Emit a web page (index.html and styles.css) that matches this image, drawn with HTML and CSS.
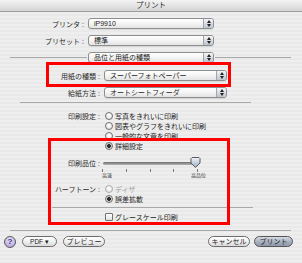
FILE: index.html
```html
<!DOCTYPE html>
<html lang="ja">
<head>
  <meta charset="UTF-8">
  <title>プリント</title>
  <link rel="stylesheet" href="styles.css">
</head>
<body>
  <div class="window">
    <div class="titlebar">プリント</div>

    <div class="head">
      <div class="row">
        <span class="label">プリンタ :</span>
        <div class="popup wide"><span class="value">iP9910</span><i class="arrows"></i></div>
      </div>
      <div class="row">
        <span class="label">プリセット :</span>
        <div class="popup wide"><span class="value">標準</span><i class="arrows"></i></div>
      </div>
    </div>

    <div class="pane-select">
      <div class="line line-left"></div>
      <div class="popup wide"><span class="value">品位と用紙の種類</span><i class="arrows"></i></div>
      <div class="line line-right"></div>
    </div>

    <div class="panel">
      <div class="row">
        <span class="label">用紙の種類 :</span>
        <div class="popup paper"><span class="value">スーパーフォトペーパー</span><i class="arrows"></i></div>
      </div>
      <div class="row row-feed">
        <span class="label">給紙方法 :</span>
        <div class="popup paper"><span class="value">オートシートフィーダ</span><i class="arrows"></i></div>
      </div>

      <div class="sep sep-a"></div>

      <div class="opt opt-first">
        <span class="label">印刷設定 :</span>
        <span class="radio"></span>写真をきれいに印刷
      </div>
      <div class="opt">
        <span class="label"></span>
        <span class="radio"></span>図表やグラフをきれいに印刷
      </div>
      <div class="opt">
        <span class="label"></span>
        <span class="radio"></span>一般的な文章を印刷
      </div>
      <div class="opt">
        <span class="label"></span>
        <span class="radio on"></span>詳細設定
      </div>

      <div class="opt slider-row">
        <span class="label">印刷品位 :</span>
        <div class="slider">
          <div class="track"></div>
          <svg class="thumb" width="11" height="11" viewBox="0 0 11 11">
            <defs>
              <linearGradient id="thumbFill" x1="0" y1="0" x2="0" y2="1">
                <stop offset="0" stop-color="#f2f5fa"/>
                <stop offset="1" stop-color="#9aabc4"/>
              </linearGradient>
            </defs>
            <polygon points="1,1.5 2,0.5 9,0.5 10,1.5 10,6 5.5,10.5 1,6" fill="url(#thumbFill)" stroke="#5a5a5a" stroke-width="1"/>
          </svg>
        </div>
      </div>
      <div class="scale">
        <div class="ticks"><i></i><i></i><i></i><i></i><i></i></div>
        <div class="scale-labels"><span>高速</span><span>高品位</span></div>
      </div>

      <div class="opt opt-halftone off">
        <span class="label">ハーフトーン :</span>
        <span class="radio"></span>ディザ
      </div>
      <div class="opt">
        <span class="label"></span>
        <span class="radio on"></span>誤差拡散
      </div>

      <div class="sep sep-b"></div>

      <div class="opt opt-gray">
        <span class="label"></span>
        <span class="check"></span>グレースケール印刷
      </div>
    </div>

    <div class="sep sep-bottom"></div>

    <div class="footer">
      <span class="help">?</span>
      <span class="btn btn-pdf">PDF ▾</span>
      <span class="btn btn-preview">プレビュー</span>
      <span class="btn btn-cancel">キャンセル</span>
      <span class="btn btn-print">プリント</span>
    </div>

    <div class="mark mark-paper"></div>
    <div class="mark mark-detail"></div>
  </div>
</body>
</html>
```

FILE: styles.css
```css
body {
  margin: 0;
  font-family: "Liberation Sans", "Noto Sans CJK JP", sans-serif;
  font-size: 7px;
  color: #1c1c1c;
}
.window {
  position: relative;
  width: 302px;
  height: 263px;
  overflow: hidden;
  background: repeating-linear-gradient(#eeeeee 0 2px, #e9e9e9 2px 4px);
}
.titlebar {
  height: 11px;
  line-height: 11px;
  text-align: center;
  font-size: 7.5px;
  color: #333;
  background: linear-gradient(#f3f3f3, #d4d4d4);
  border-bottom: 1px solid #9c9c9c;
}

.row {
  display: flex;
  align-items: center;
  height: 11px;
}
.label {
  flex: none;
  text-align: right;
  white-space: nowrap;
  color: #2a2a2a;
}

.head {
  display: flex;
  flex-direction: column;
  gap: 6px;
  padding-top: 6px;
}
.head .label {
  width: 84px;
  margin-right: 4px;
}

/* popup buttons */
.popup {
  box-sizing: border-box;
  height: 11px;
  display: flex;
  align-items: stretch;
  border: 1px solid #8e8e8e;
  border-radius: 3px;
  background: linear-gradient(#ffffff, #f4f4f4 50%, #e3e3e3);
  box-shadow: 0 1px 0 rgba(0,0,0,0.08);
}
.popup .value {
  flex: 1;
  padding-left: 5px;
  line-height: 9px;
  white-space: nowrap;
  overflow: hidden;
}
.popup.wide { width: 126px; }
.popup.paper { width: 123px; }
.arrows {
  flex: none;
  width: 9px;
  display: flex;
  flex-direction: column;
  align-items: center;
  justify-content: center;
  gap: 1px;
  border-left: 1px solid #a4a4a4;
  border-radius: 0 2px 2px 0;
  background: linear-gradient(#f4f6f9, #bcc4cf);
}
.arrows::before,
.arrows::after {
  content: "";
  border-left: 2px solid transparent;
  border-right: 2px solid transparent;
}
.arrows::before { border-bottom: 3px solid #222; }
.arrows::after { border-top: 3px solid #222; }

.pane-select {
  display: flex;
  align-items: center;
  height: 11px;
  margin-top: 6px;
}
.line {
  height: 1px;
  background: #a9a9a9;
}
.line-left {
  width: 77px;
  margin: 0 1px 0 10px;
}
.line-right {
  width: 76px;
  margin-left: 1px;
}

/* settings panel */
.panel {
  margin-top: 7px;
}
.panel .row .label {
  width: 100px;
  margin-right: 4px;
}
.row-feed {
  margin-top: 6px;
}
.sep {
  height: 1px;
  background: #a9a9a9;
}
.sep-a {
  width: 231px;
  margin: 4px 0 0 20px;
}

.opt {
  display: flex;
  align-items: center;
  height: 10px;
  white-space: nowrap;
}
.opt .label {
  width: 100px;
  margin-right: 5px;
}
.opt-first { margin-top: 8px; }
.radio {
  flex: none;
  box-sizing: border-box;
  width: 8px;
  height: 8px;
  margin-right: 2px;
  border: 1px solid #707070;
  border-radius: 50%;
  background: radial-gradient(circle at 50% 35%, #ffffff, #dcdcdc);
}
.radio.on {
  background: radial-gradient(circle, #2c2c2c 0 1.6px, #cfd3d9 2.2px);
}
.check {
  flex: none;
  box-sizing: border-box;
  width: 8px;
  height: 8px;
  margin-right: 2px;
  border: 1px solid #707070;
  border-radius: 1px;
  background: linear-gradient(#ffffff, #dedede);
}
.off { color: #9a9a9a; }
.off .label { color: #2a2a2a; }
.off .radio { border-color: #acacac; }

.slider-row {
  margin-top: 7px;
}
.slider-row .label {
  margin-right: 3px;
}
.slider {
  width: 98px;
  display: flex;
  align-items: center;
}
.track {
  flex: 1;
  height: 3px;
  border-radius: 2px;
  background: linear-gradient(#6e6e6e, #b4b4b4);
}
.thumb {
  flex: none;
  margin-left: -6px;
  margin-top: -1px;
}
.scale {
  width: 96px;
  height: 11px;
  margin-left: 102px;
}
.ticks {
  display: flex;
  justify-content: space-between;
  padding-top: 1px;
}
.ticks i {
  width: 1px;
  height: 3px;
  background: #7a7a7a;
}
.scale-labels {
  display: flex;
  justify-content: space-between;
  font-size: 5px;
  line-height: 6px;
  margin-right: -8px;
  color: #333;
}

.opt-halftone { margin-top: 5px; }
.sep-b {
  width: 201px;
  margin: 3px 0 0 52px;
}
.opt-gray { margin-top: 4px; }

.sep-bottom {
  width: 281px;
  margin: 8px 0 0 10px;
}

/* bottom buttons */
.footer {
  display: flex;
  align-items: center;
  height: 11px;
  margin-top: 5px;
  padding: 0 9px 0 4px;
}
.help {
  box-sizing: border-box;
  width: 12px;
  height: 12px;
  border: 1px solid #5a5a5a;
  border-radius: 50%;
  background: radial-gradient(circle at 50% 30%, #ece8fa, #a596d6);
  color: #3b2a86;
  font-weight: bold;
  font-size: 8px;
  line-height: 10px;
  text-align: center;
}
.btn {
  box-sizing: border-box;
  height: 11px;
  line-height: 9px;
  border: 1px solid #6c6c6c;
  border-radius: 6px;
  background: linear-gradient(#ffffff, #f0f0f0 50%, #d9d9d9);
  text-align: center;
  white-space: nowrap;
}
.btn-pdf {
  width: 35px;
  margin-left: 6px;
  font-size: 6.5px;
}
.btn-preview {
  width: 42px;
  margin-left: 6px;
}
.btn-cancel {
  width: 42px;
  margin-left: auto;
}
.btn-print {
  width: 39px;
  margin-left: 4px;
  border-color: #555;
  background: linear-gradient(#d6dbe3, #a9b2c0 50%, #8e99aa);
}

/* red annotation boxes drawn over the dialog */
.mark {
  position: absolute;
  border: 3px solid #ff0000;
  box-sizing: border-box;
}
.mark-paper {
  left: 46px;
  top: 62px;
  width: 185px;
  height: 25px;
}
.mark-detail {
  left: 48px;
  top: 138px;
  width: 182px;
  height: 87px;
}
```
